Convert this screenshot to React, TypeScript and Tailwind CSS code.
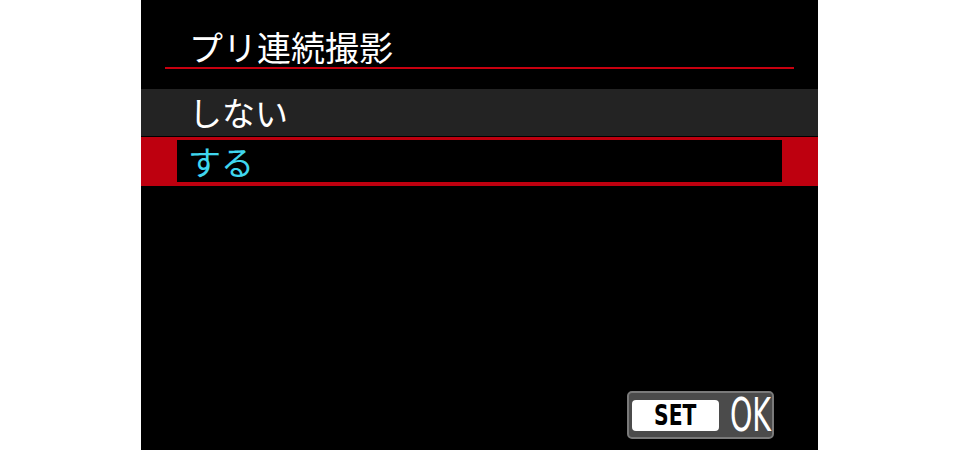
import React from 'react';

const jp = "font-['Noto_Sans_CJK_JP','Noto_Sans',sans-serif]";

function SetOkButton() {
  return (
    <div className="flex h-[48px] w-[147px] items-center rounded-[5px] border-2 border-[#7a7a7a] bg-[#4b4b4b] pl-[3px]">
      <div className="flex h-[31px] w-[87px] items-center justify-center rounded-[4px] bg-white">
        <span className="inline-block scale-x-[0.7] font-['DejaVu_Sans',sans-serif] text-[29px] leading-none font-bold text-black">
          SET
        </span>
      </div>
      <span className="ml-[1px] inline-block w-[52px] scale-x-[0.62] text-center font-['DejaVu_Sans',sans-serif] text-[46px] leading-none text-white">
        OK
      </span>
    </div>
  );
}

export default function App() {
  return (
    <div className="h-[450px] w-[960px] bg-white">
      <div className={`ml-[141px] flex h-[450px] w-[677px] flex-col bg-black ${jp}`}>
        <div className="px-[24px]">
          <div className="flex h-[67px] items-end pb-[3px] pl-[24px]">
            <span className="text-[34px] leading-none text-white">プリ連続撮影</span>
          </div>
          <div className="h-[2px] bg-[#c8000f]" />
        </div>

        <div className="mt-[20px] flex h-[47px] items-center bg-[#232323] pl-[48px]">
          <span className="text-[33px] leading-none text-white">しない</span>
        </div>

        <div className="mt-[1px] h-[49px] bg-[#be000f] px-[36px] pt-[3px] pb-[4px]">
          <div className="flex h-full items-center bg-black pl-[11px]">
            <span className="text-[33px] leading-none text-[#3fd6ef]">する</span>
          </div>
        </div>

        <div className="mt-auto flex justify-end pr-[44px] pb-[11px]">
          <SetOkButton />
        </div>
      </div>
    </div>
  );
}
